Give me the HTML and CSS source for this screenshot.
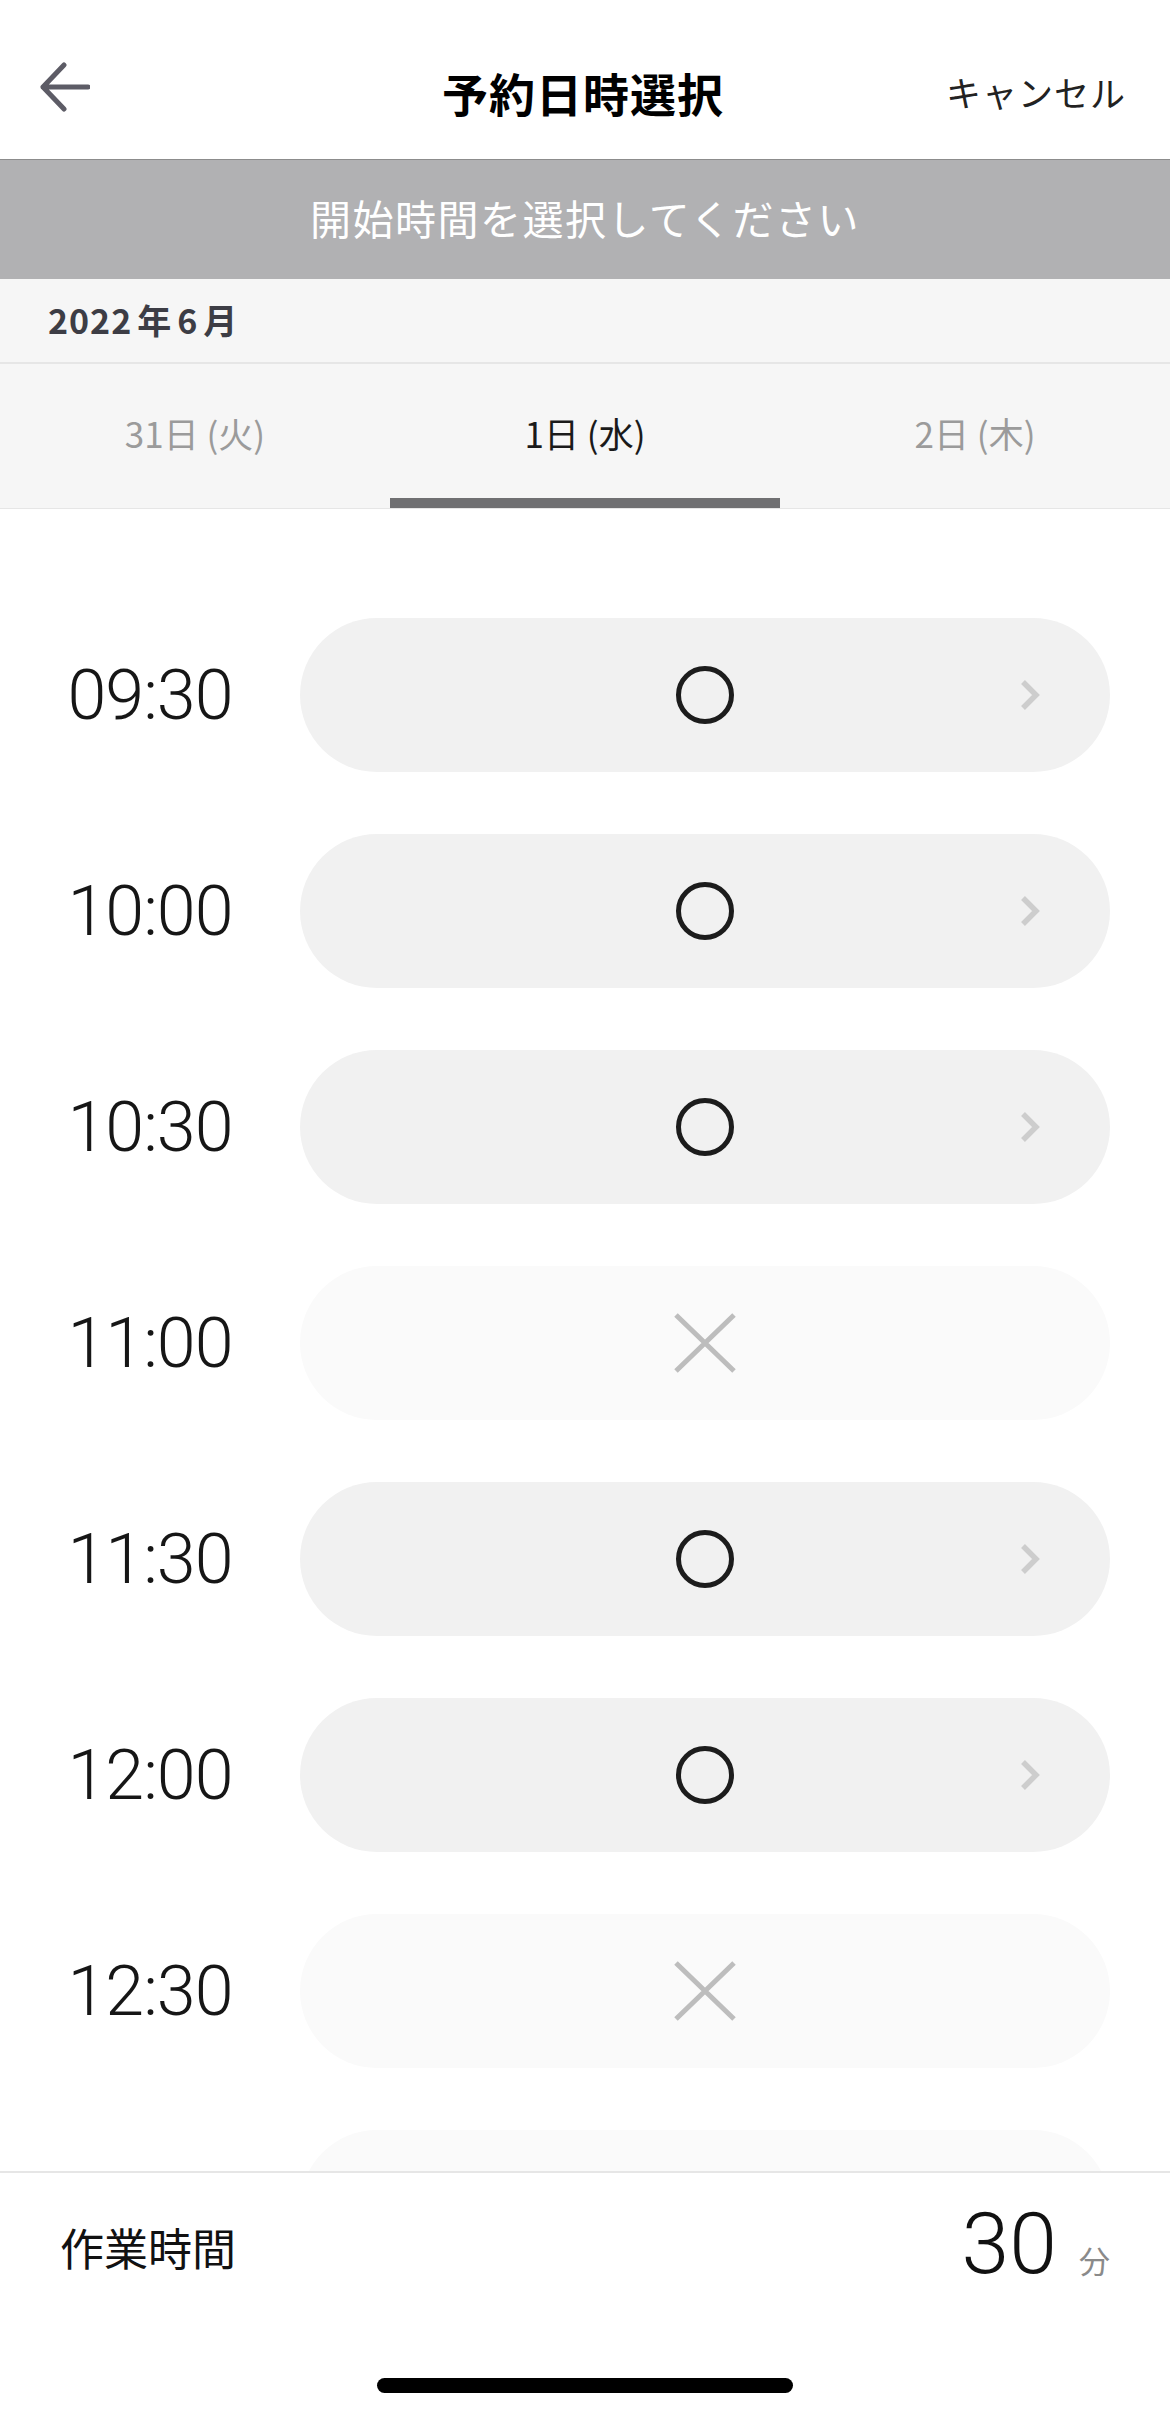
FILE: index.html
```html
<!DOCTYPE html>
<html lang="ja">
<head>
<meta charset="utf-8">
<title>予約日時選択</title>
<link rel="stylesheet" href="styles.css">
</head>
<body>
<div class="page">
  <header class="header">
    <div class="back">
      <svg width="50" height="50" viewBox="0 0 50 50"><path d="M24 3 L3 25 L24 47 M3 25 H48" fill="none" stroke="#5d5c66" stroke-width="5" stroke-linecap="round" stroke-linejoin="round"/></svg>
    </div>
    <div class="title">予約日時選択</div>
    <div class="cancel">キャンセル</div>
  </header>
  <div class="banner">開始時間を選択してください</div>
  <div class="month">2022<span class="gap">年</span>6<span class="gap">月</span></div>
  <nav class="tabs">
    <div class="tab">31日 (火)</div>
    <div class="tab active">1日 (水)</div>
    <div class="tab">2日 (木)</div>
  </nav>
  <main class="list">
    <div class="row"><div class="time">09:30</div><div class="slot ok"><span class="circle"></span><svg class="chev" width="20" height="32" viewBox="0 0 20 32"><path d="M3 3 L16 16 L3 29" fill="none" stroke="#cdcdcd" stroke-width="5.5"/></svg></div></div>
    <div class="row"><div class="time">10:00</div><div class="slot ok"><span class="circle"></span><svg class="chev" width="20" height="32" viewBox="0 0 20 32"><path d="M3 3 L16 16 L3 29" fill="none" stroke="#cdcdcd" stroke-width="5.5"/></svg></div></div>
    <div class="row"><div class="time">10:30</div><div class="slot ok"><span class="circle"></span><svg class="chev" width="20" height="32" viewBox="0 0 20 32"><path d="M3 3 L16 16 L3 29" fill="none" stroke="#cdcdcd" stroke-width="5.5"/></svg></div></div>
    <div class="row"><div class="time">11:00</div><div class="slot ng"><svg class="cross" width="62" height="60" viewBox="0 0 62 60"><path d="M2 2 L60 58 M60 2 L2 58" fill="none" stroke="#bdbdbd" stroke-width="5"/></svg></div></div>
    <div class="row"><div class="time">11:30</div><div class="slot ok"><span class="circle"></span><svg class="chev" width="20" height="32" viewBox="0 0 20 32"><path d="M3 3 L16 16 L3 29" fill="none" stroke="#cdcdcd" stroke-width="5.5"/></svg></div></div>
    <div class="row"><div class="time">12:00</div><div class="slot ok"><span class="circle"></span><svg class="chev" width="20" height="32" viewBox="0 0 20 32"><path d="M3 3 L16 16 L3 29" fill="none" stroke="#cdcdcd" stroke-width="5.5"/></svg></div></div>
    <div class="row"><div class="time">12:30</div><div class="slot ng"><svg class="cross" width="62" height="60" viewBox="0 0 62 60"><path d="M2 2 L60 58 M60 2 L2 58" fill="none" stroke="#bdbdbd" stroke-width="5"/></svg></div></div>
    <div class="row"><div class="time"></div><div class="slot ng"></div></div>
  </main>
  <footer class="footer">
    <div class="footer-row">
      <div class="label">作業時間</div>
      <div class="duration"><span class="num">30</span><span class="unit">分</span></div>
    </div>
    <div class="home-bar"></div>
  </footer>
</div>
</body>
</html>
```

FILE: styles.css
```css
* { box-sizing: border-box; margin: 0; padding: 0; }
html, body { background: #fff; }
body {
  font-family: "Noto Sans CJK JP", "Noto Sans", sans-serif;
  color: #1a1a1a;
}
.page {
  width: 1170px;
  height: 2417px;
  display: flex;
  flex-direction: column;
  overflow: hidden;
}
.header {
  height: 160px;
  flex: none;
  border-bottom: 1px solid #8c8c8c;
  display: grid;
  grid-template-columns: 1fr auto 1fr;
  align-items: center;
  padding: 24px 44px 0 40px;
}
.back { width: 50px; height: 50px; margin-top: -10px; justify-self: start; }
.back svg { display: block; }
.title {
  text-align: center;
  font-size: 46px;
  font-weight: 700;
  color: #000;
  letter-spacing: 1px;
}
.cancel {
  justify-self: end;
  font-size: 35px;
  color: #222;
  letter-spacing: 1px;
}
.banner {
  height: 119px;
  flex: none;
  background: #b1b1b3;
  color: #fff;
  font-size: 41px;
  display: flex;
  align-items: center;
  justify-content: center;
  letter-spacing: 1.5px;
  padding-bottom: 6px;
}
.month {
  height: 85px;
  flex: none;
  background: #f6f6f6;
  border-bottom: 2px solid #e6e6e6;
  display: flex;
  align-items: center;
  padding-left: 48px;
  font-size: 34px;
  font-weight: 700;
  color: #3d3d45;
  letter-spacing: 1px;
  padding-bottom: 2px;
}
.month .gap { margin: 0 5px; }
.month .gap:last-child { margin-right: 0; }
.tabs {
  height: 145px;
  flex: none;
  background: #f6f6f6;
  border-bottom: 1px solid #e6e6e6;
  display: flex;
}
.tab {
  flex: 1;
  display: flex;
  align-items: center;
  justify-content: center;
  font-size: 35px;
  color: #9b9b9b;
  border-bottom: 10px solid transparent;
  padding-top: 2px;
}
.tab.active {
  color: #1a1a1a;
  border-bottom-color: #707072;
}
.list {
  flex: 1;
  overflow: hidden;
  padding: 109px 60px 0 0;
  display: flex;
  flex-direction: column;
  gap: 62px;
}
.row {
  display: flex;
  align-items: center;
  flex: none;
}
.time {
  width: 300px;
  text-align: center;
  font-family: Roboto, "Noto Sans", sans-serif;
  font-weight: 300;
  font-size: 70px;
  color: #161616;
  letter-spacing: -1px;
}
.slot {
  flex: 1;
  height: 154px;
  border-radius: 77px;
  display: flex;
  align-items: center;
  justify-content: center;
  position: relative;
}
.slot.ok { background: #f1f1f1; }
.slot.ng { background: #fafafa; }
.circle {
  width: 58px;
  height: 58px;
  border: 5px solid #1c1c1c;
  border-radius: 50%;
}
.chev {
  position: absolute;
  right: 70px;
  top: 61px;
}
.cross { display: block; }
.footer {
  height: 246px;
  flex: none;
  border-top: 2px solid #e6e6e6;
  background: #fff;
  display: flex;
  flex-direction: column;
  align-items: center;
}
.footer-row {
  width: 100%;
  height: 140px;
  display: flex;
  align-items: center;
  justify-content: space-between;
  padding: 0 60px;
}
.label {
  font-size: 44px;
  color: #111;
  margin-top: 8px;
}
.duration {
  display: flex;
  align-items: baseline;
}
.num {
  font-family: Roboto, "Noto Sans", sans-serif;
  font-weight: 300;
  font-size: 86px;
  color: #111;
}
.unit {
  font-size: 31px;
  color: #8a8a8a;
  margin-left: 22px;
}
.home-bar {
  width: 416px;
  height: 15px;
  border-radius: 8px;
  background: #000;
  margin-top: 65px;
}
```
